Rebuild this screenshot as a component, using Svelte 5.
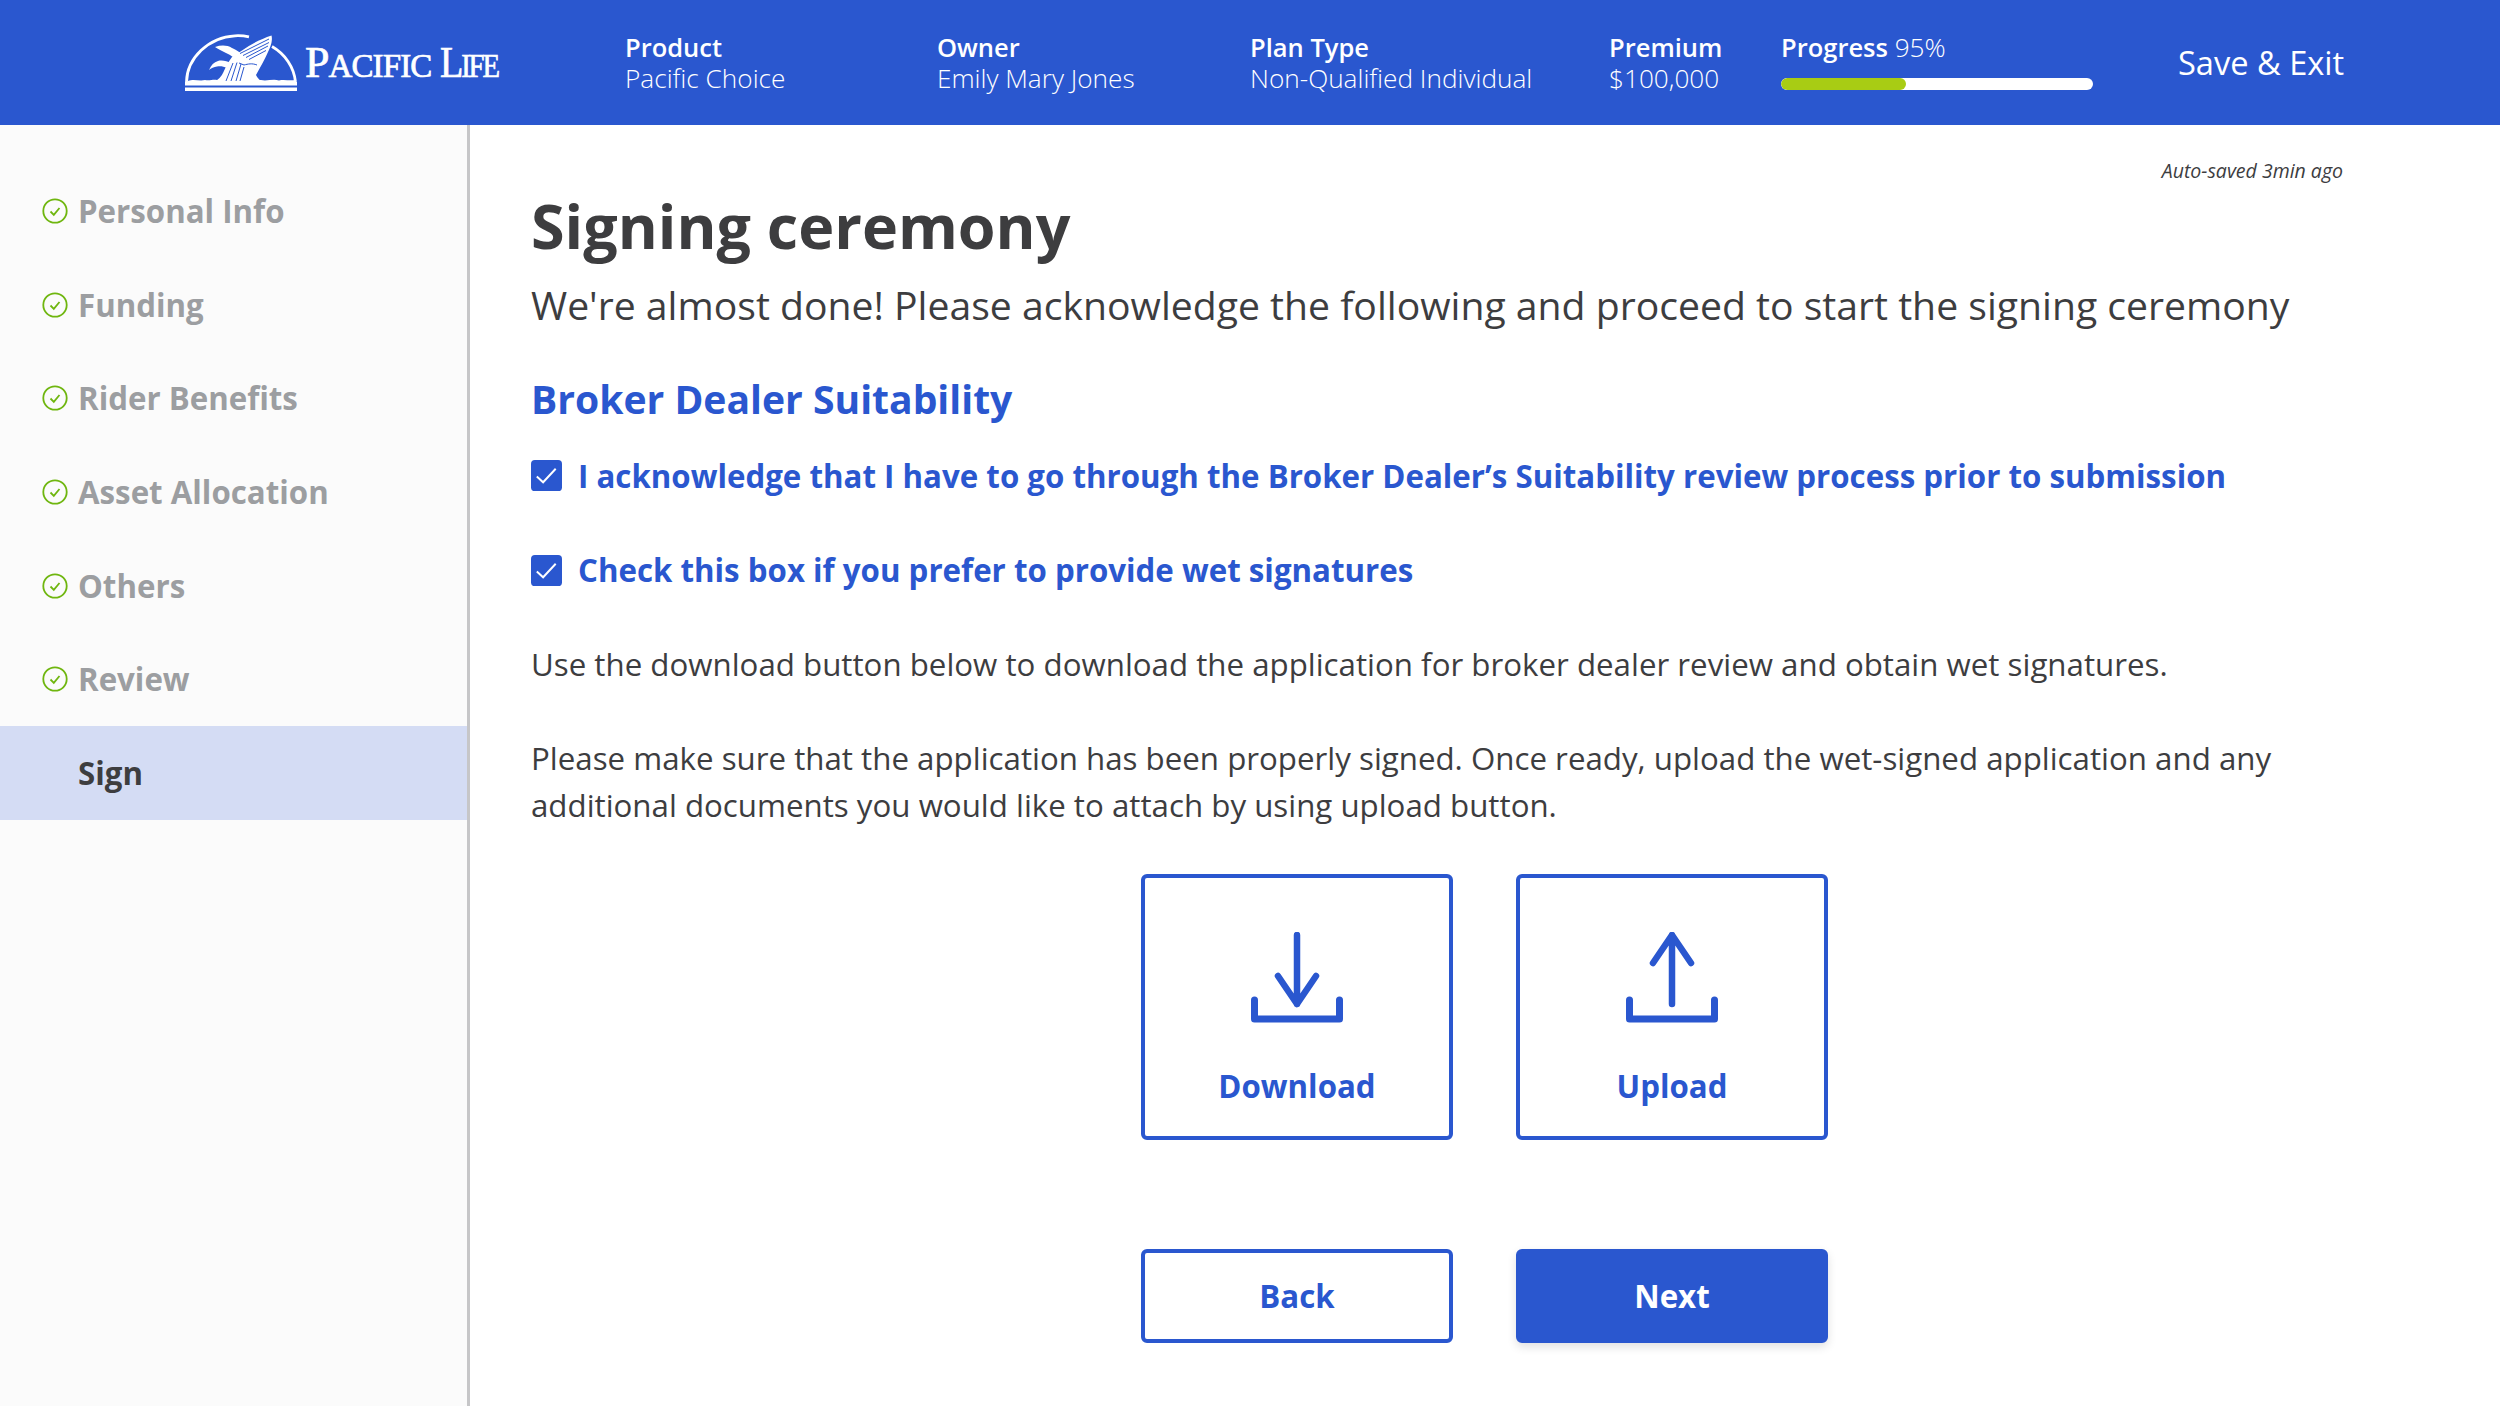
<script>
  const meta = [
    { label: 'Product', value: 'Pacific Choice', w: 312 },
    { label: 'Owner', value: 'Emily Mary Jones', w: 313 },
    { label: 'Plan Type', value: 'Non-Qualified Individual', w: 359 },
    { label: 'Premium', value: '$100,000', w: 172 }
  ];
  const steps = ['Personal Info', 'Funding', 'Rider Benefits', 'Asset Allocation', 'Others', 'Review'];
</script>

<div class="page">
  <header class="top">
    <div class="logo">
      <svg class="mark" viewBox="0 0 112 58" width="112" height="58" aria-hidden="true">
        <path d="M1.500 48 C2 24 24 3 50 1.800 C56 1.500 60 2 64 2.800 M87 12.500 C100 20 109 33 110.500 48" fill="none" stroke="#fff" stroke-width="2.800"/>
        <path d="M0 48 H112 V51.500 H0 Z M0 53.500 H112 V57 H0 Z" fill="#fff"/>
        <path d="M3 47 C9 44.500 14 47.500 20 46 C25 47 28 45 32 46 L76 46 C82 47.500 88 44.500 94 46.500 C99 45 104 47 110 46 V49 H3 Z" fill="#fff"/>
        <path d="M86.500 1.500 C88 7 85 14 83 18 C80 25 76 32 71 41 C72 44 75 46 78 49 L28 49 C33 46 37 42 38.500 38 C41 32 44 27 47 23 L57 16.500 C66 10 76 5 86.500 1.500 Z" fill="#fff"/>
        <path d="M30 13 C36 11 42 11 47 14 C52 16 56 19 59 23 L54 29 C50 24 46 21 41 19 C37 17 33 15 30 13 Z" fill="#fff"/>
        <path d="M24 36 C26 31 29 28 33 27 C37 26 42 27 46 29 L42 34 C38 32 35 32 32 32.500 C29 33 26 34 24 36 Z" fill="#fff"/>
        <path d="M55 19.500 L84 5 M58 21.500 L84 8.500 M61 23.500 L83 12 M64 25.500 L81 16.500 M48 29 L41 47 M52 28.500 L46 47 M56 30 L51 47 M59 33 L55 47 M54 29 L59 31 C63 30 67 29 72 31" fill="none" stroke="#2a57cf" stroke-width="1"/>
      </svg>
      <span class="wordmark"><span class="pacific"><b>P</b>ACIFIC</span> <span class="life"><b>L</b>IFE</span></span>
    </div>

    <div class="meta">
      {#each meta as m}
        <div class="meta-item" style="width:{m.w}px">
          <strong>{m.label}</strong>
          <span>{m.value}</span>
        </div>
      {/each}
      <div class="progress">
        <div class="progress-label"><strong>Progress</strong> <span>95%</span></div>
        <div class="track"><div class="fill"></div></div>
      </div>
    </div>
    <div class="save">Save &amp; Exit</div>
  </header>

  <div class="body">
    <nav class="side">
      {#each steps as s}
        <div class="step">
          <svg class="tick" viewBox="0 0 26 26" width="26" height="26" aria-hidden="true">
            <circle cx="13" cy="13" r="11.700" fill="none" stroke="#6fb60f" stroke-width="1.800"/>
            <path d="M8.500 13.500 L11.800 16.800 L17.500 10" fill="none" stroke="#6fb60f" stroke-width="1.800"/>
          </svg>
          <span>{s}</span>
        </div>
      {/each}
      <div class="step active"><span>Sign</span></div>
    </nav>

    <main class="content">
      <div class="autosave">Auto-saved 3min ago</div>
      <h1>Signing ceremony</h1>
      <p class="lead">We're almost done! Please acknowledge the following and proceed to start the signing ceremony</p>
      <h2>Broker Dealer Suitability</h2>

      <div class="check">
        <svg viewBox="0 0 32 32" width="31" height="31" aria-hidden="true">
          <rect width="32" height="32" rx="4" fill="#2a57cf"/>
          <path d="M6 17 L12.500 23 L25.500 9" fill="none" stroke="#fff" stroke-width="2"/>
        </svg>
        <span>I acknowledge that I have to go through the Broker Dealer’s Suitability review process prior to submission</span>
      </div>
      <div class="check">
        <svg viewBox="0 0 32 32" width="31" height="31" aria-hidden="true">
          <rect width="32" height="32" rx="4" fill="#2a57cf"/>
          <path d="M6 17 L12.500 23 L25.500 9" fill="none" stroke="#fff" stroke-width="2"/>
        </svg>
        <span>Check this box if you prefer to provide wet signatures</span>
      </div>

      <p class="para first">Use the download button below to download the application for broker dealer review and obtain wet signatures.</p>
      <p class="para second">Please make sure that the application has been properly signed. Once ready, upload the wet-signed application and any additional documents you would like to attach by using upload button.</p>

      <div class="row tiles">
        <button class="tile">
          <svg viewBox="0 0 92 92" width="92" height="92" aria-hidden="true">
            <path d="M46 3 V72 M27 44 L46 72 L65 44" fill="none" stroke="#2a57cf" stroke-width="6.500" stroke-linecap="round" stroke-linejoin="round"/>
            <path d="M3.500 68 V87 H88.500 V68" fill="none" stroke="#2a57cf" stroke-width="7" stroke-linecap="round" stroke-linejoin="round"/>
          </svg>
          <span>Download</span>
        </button>
        <button class="tile">
          <svg viewBox="0 0 92 92" width="92" height="92" aria-hidden="true">
            <path d="M46 3 V72 M27 31 L46 3 L65 31" fill="none" stroke="#2a57cf" stroke-width="6.500" stroke-linecap="round" stroke-linejoin="round"/>
            <path d="M3.500 68 V87 H88.500 V68" fill="none" stroke="#2a57cf" stroke-width="7" stroke-linecap="round" stroke-linejoin="round"/>
          </svg>
          <span>Upload</span>
        </button>
      </div>

      <div class="row actions">
        <button class="btn ghost">Back</button>
        <button class="btn solid">Next</button>
      </div>
    </main>
  </div>
</div>

<style>
  :global(body) {
    margin: 0;
    background: #fff;
  }
  .page {
    width: 2500px;
    height: 1406px;
    display: flex;
    flex-direction: column;
    overflow: hidden;
    font-family: "Open Sans", "Noto Sans", sans-serif;
    color: #3d3d3f;
  }
  .top {
    height: 125px;
    flex: none;
    background: #2a57cf;
    color: #fff;
    display: flex;
    align-items: center;
    padding-left: 185px;
    box-sizing: border-box;
  }
  .logo {
    width: 440px;
    flex: none;
    display: flex;
    align-items: center;
    gap: 8px;
    height: 100%;
  }
  .mark {
    flex: none;
    margin-top: 1px;
  }
  .wordmark {
    font-family: "Liberation Serif", serif;
    font-size: 33px;
    line-height: 1;
    white-space: nowrap;
    -webkit-text-stroke: 0.7px #fff;
    margin-bottom: -1px;
  }
  .pacific {
    letter-spacing: -0.900px;
  }
  .life {
    display: inline-block;
    letter-spacing: -2.500px;
    transform: scaleX(0.87);
    transform-origin: left center;
  }
  .wordmark b {
    font-weight: 400;
    font-size: 44px;
  }
  .meta {
    display: flex;
    align-items: center;
    height: 100%;
  }
  .meta-item {
    display: flex;
    flex-direction: column;
    line-height: 31px;
    flex: none;
  }
  .meta-item strong,
  .progress strong {
    font-weight: 600;
    font-size: 25.500px;
  }
  .meta-item span,
  .progress span {
    font-weight: 300;
    font-size: 26.200px;
  }
  .progress {
    width: 312px;
    flex: none;
    align-self: flex-start;
    padding-top: 32px;
  }
  .progress-label {
    font-size: 26px;
    line-height: 31px;
  }
  .track {
    margin-top: 15px;
    height: 12px;
    border-radius: 6px;
    background: #fff;
    overflow: hidden;
  }
  .fill {
    width: 125px;
    height: 100%;
    background: #a8cc14;
    border-radius: 6px;
  }
  .save {
    margin-left: 85px;
    font-size: 32.600px;
    white-space: nowrap;
  }
  .body {
    flex: 1;
    display: flex;
    min-height: 0;
  }
  .side {
    width: 470px;
    flex: none;
    box-sizing: border-box;
    background: #fbfbfb;
    border-right: 3px solid #c6c6c8;
    padding-top: 39px;
  }
  .step {
    height: 93.700px;
    display: flex;
    align-items: center;
    gap: 10px;
    padding-left: 42px;
    box-sizing: border-box;
    font-size: 31.250px;
    font-weight: 700;
    color: #9c9ea1;
  }
  .step.active {
    background: #d4dcf4;
    color: #3d3d3f;
    padding-left: 78px;
  }
  .tick {
    flex: none;
  }
  .content {
    flex: 1;
    min-width: 0;
    box-sizing: border-box;
    padding: 0 157px 0 61px;
    display: flex;
    flex-direction: column;
  }
  .autosave {
    margin-top: 32px;
    align-self: flex-end;
    font-size: 19.500px;
    line-height: 27px;
    font-style: italic;
  }
  h1 {
    margin: 0;
    margin-top: 1px;
    font-size: 61px;
    line-height: 82px;
    font-weight: 700;
    color: #3d3d3f;
  }
  .lead {
    margin: 0;
    margin-top: 11px;
    font-size: 39.150px;
    line-height: 54px;
    white-space: nowrap;
  }
  h2 {
    margin: 0;
    margin-top: 39px;
    font-size: 39.100px;
    line-height: 56px;
    font-weight: 700;
    color: #2a57cf;
  }
  .check {
    display: flex;
    align-items: center;
    gap: 16px;
    height: 44px;
    margin-top: 26.500px;
    font-size: 31.250px;
    font-weight: 700;
    color: #2a57cf;
    white-space: nowrap;
  }
  .check + .check {
    margin-top: 50.500px;
  }
  .check svg {
    flex: none;
  }
  .para {
    margin: 0;
    font-size: 31.280px;
    line-height: 47px;
  }
  .first {
    margin-top: 48.500px;
    white-space: nowrap;
  }
  .second {
    margin-top: 47px;
  }
  .row {
    display: flex;
    gap: 63px;
    padding-left: 610px;
  }
  .tiles {
    margin-top: 45px;
  }
  .actions {
    margin-top: 109px;
  }
  button {
    font: inherit;
    cursor: pointer;
    box-sizing: border-box;
    width: 312px;
    border-radius: 6px;
    color: #2a57cf;
    background: #fff;
    border: 4px solid #2a57cf;
    font-weight: 700;
    font-size: 31.250px;
    padding: 0;
  }
  .tile {
    height: 266px;
    display: flex;
    flex-direction: column;
    align-items: center;
    padding-top: 54px;
  }
  .tile span {
    margin-top: 40px;
    line-height: 44px;
  }
  .btn {
    height: 94px;
  }
  .solid {
    background: #2a57cf;
    color: #fff;
    box-shadow: 0 4px 10px rgba(0, 0, 0, 0.12);
  }
</style>
